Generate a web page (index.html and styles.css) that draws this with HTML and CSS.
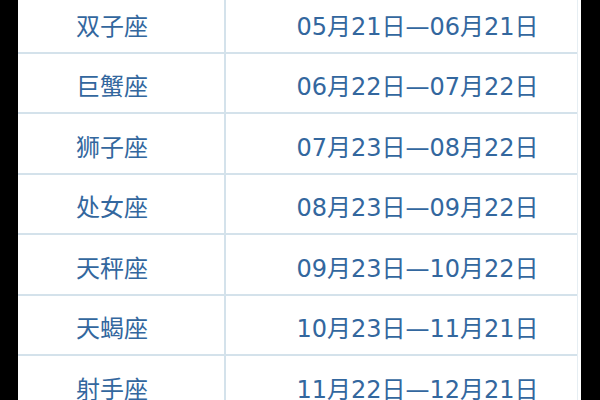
FILE: index.html
```html
<!DOCTYPE html>
<html lang="zh">
<head>
<meta charset="utf-8">
<link rel="stylesheet" href="styles.css">
</head>
<body>
<div class="sheet">
  <div class="table">
    <div class="row"><div class="name">双子座</div><div class="date">05月21日—06月21日</div></div>
    <div class="row"><div class="name">巨蟹座</div><div class="date">06月22日—07月22日</div></div>
    <div class="row"><div class="name">狮子座</div><div class="date">07月23日—08月22日</div></div>
    <div class="row"><div class="name">处女座</div><div class="date">08月23日—09月22日</div></div>
    <div class="row"><div class="name">天秤座</div><div class="date">09月23日—10月22日</div></div>
    <div class="row"><div class="name">天蝎座</div><div class="date">10月23日—11月21日</div></div>
    <div class="row"><div class="name">射手座</div><div class="date">11月22日—12月21日</div></div>
  </div>
</div>
</body>
</html>
```
FILE: styles.css
```css
html, body {
  margin: 0;
  padding: 0;
  background: #000;
  height: 400px;
  overflow: hidden;
}
.sheet {
  margin-left: 18px;
  width: 563px;
  height: 400px;
  background: #fff;
  overflow: hidden;
}
.table {
  margin-top: -7px;
  width: 559px;
  border-right: 1px solid #e6eef3;
}
.row {
  display: flex;
  height: 58.5px;
  border-bottom: 2px solid #d4e2eb;
  color: #33679e;
}
.name {
  width: 208px;
  border-right: 2px solid #d4e2eb;
  display: flex;
  align-items: center;
  justify-content: center;
  padding-top: 4px;
  padding-right: 18px;
  box-sizing: border-box;
  font-family: "Noto Sans CJK SC", sans-serif;
  font-size: 24px;
}
.date {
  flex: 1;
  display: flex;
  align-items: center;
  justify-content: center;
  padding-top: 4px;
  padding-left: 32px;
  box-sizing: border-box;
  font-family: "DejaVu Sans", "Noto Sans CJK SC", sans-serif;
  font-size: 24px;
}
```
